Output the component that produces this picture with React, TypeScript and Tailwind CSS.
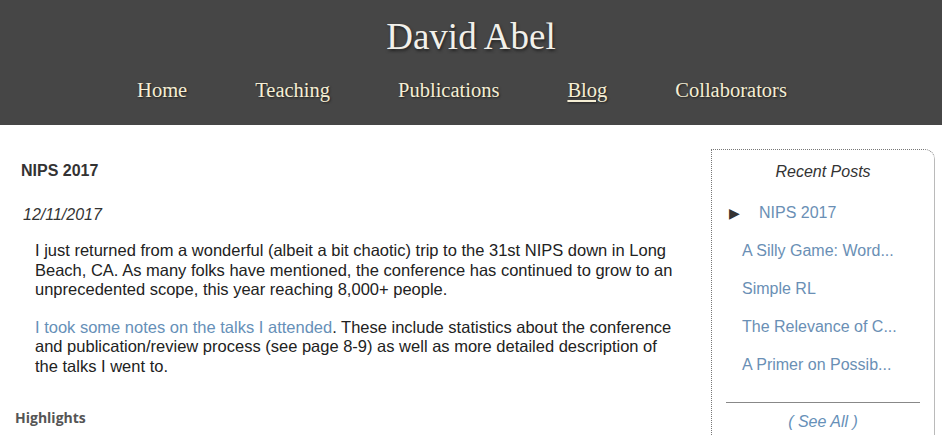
import React from 'react';

const navItems = ['Home', 'Teaching', 'Publications', 'Blog', 'Collaborators'];

const recentPosts = [
  'A Silly Game: Word...',
  'Simple RL',
  'The Relevance of C...',
  'A Primer on Possib...',
];

export default function App() {
  return (
    <div className="min-h-screen bg-white font-['Liberation_Sans',Arial,sans-serif]">
      <header className="h-[125px] bg-[#464646] pt-[15px] text-center">
        <h1 className="font-['Liberation_Serif',serif] text-[37px] leading-[44px] text-[#f2f0ea] [text-shadow:1px_2px_3px_#222]">
          David Abel
        </h1>
        <nav className="mt-[19px] flex justify-center gap-[68px] pr-[18px] font-['Liberation_Serif',serif] text-[20.5px] leading-[24px] text-[#f5eed4] [text-shadow:1px_1px_2px_#222]">
          {navItems.map((item) => (
            <a
              key={item}
              href="#"
              className={item === 'Blog' ? 'underline underline-offset-[3px]' : ''}
            >
              {item}
            </a>
          ))}
        </nav>
      </header>

      <div className="flex">
        <main className="w-[700px] pt-[36px]">
          <h2 className="pl-[21px] text-[16px] font-bold leading-[20px] text-[#333]">
            NIPS 2017
          </h2>
          <div className="mt-[24px] pl-[23px] text-[16px] italic leading-[20px] text-[#333]">
            12/11/2017
          </div>
          <div className="mt-[16px] w-[680px] pl-[35px] text-[16.5px] leading-[19.5px] text-[#222]">
            <p>
              I just returned from a wonderful (albeit a bit chaotic) trip to the 31st NIPS down in
              Long Beach, CA. As many folks have mentioned, the conference has continued to grow to
              an unprecedented scope, this year reaching 8,000+ people.
            </p>
            <p className="mt-[18px]">
              <a href="#" className="text-[#6690b8]">
                I took some notes on the talks I attended
              </a>
              . These include statistics about the conference and publication/review process (see
              page 8-9) as well as more detailed description of the talks I went to.
            </p>
          </div>
          <h3 className="mt-[32px] pl-[15px] font-['Open_Sans',sans-serif] text-[14px] font-bold leading-[20px] text-[#555]">
            Highlights
          </h3>
        </main>

        <aside className="ml-[11px] mt-[24px] h-[320px] w-[224px] rounded-tr-[10px] border border-dotted border-[#777]">
          <div className="pt-[12px] text-center text-[16px] italic leading-[20px] text-[#333]">
            Recent Posts
          </div>
          <ul className="mt-[21px] text-[16px] leading-[20px] text-[#6a8fb5]">
            <li className="flex items-center pl-[17px]">
              <span className="w-[30px] text-[14px] text-[#333]">▶</span>
              <a href="#">NIPS 2017</a>
            </li>
            {recentPosts.map((p) => (
              <li key={p} className="mt-[18px] pl-[30px]">
                <a href="#">{p}</a>
              </li>
            ))}
          </ul>
          <div className="mx-[14px] mt-[27px] border-t border-[#888]" />
          <div className="pt-[9px] text-center text-[16px] italic leading-[20px] text-[#6690b8]">
            <a href="#">( See All )</a>
          </div>
        </aside>
      </div>
    </div>
  );
}
